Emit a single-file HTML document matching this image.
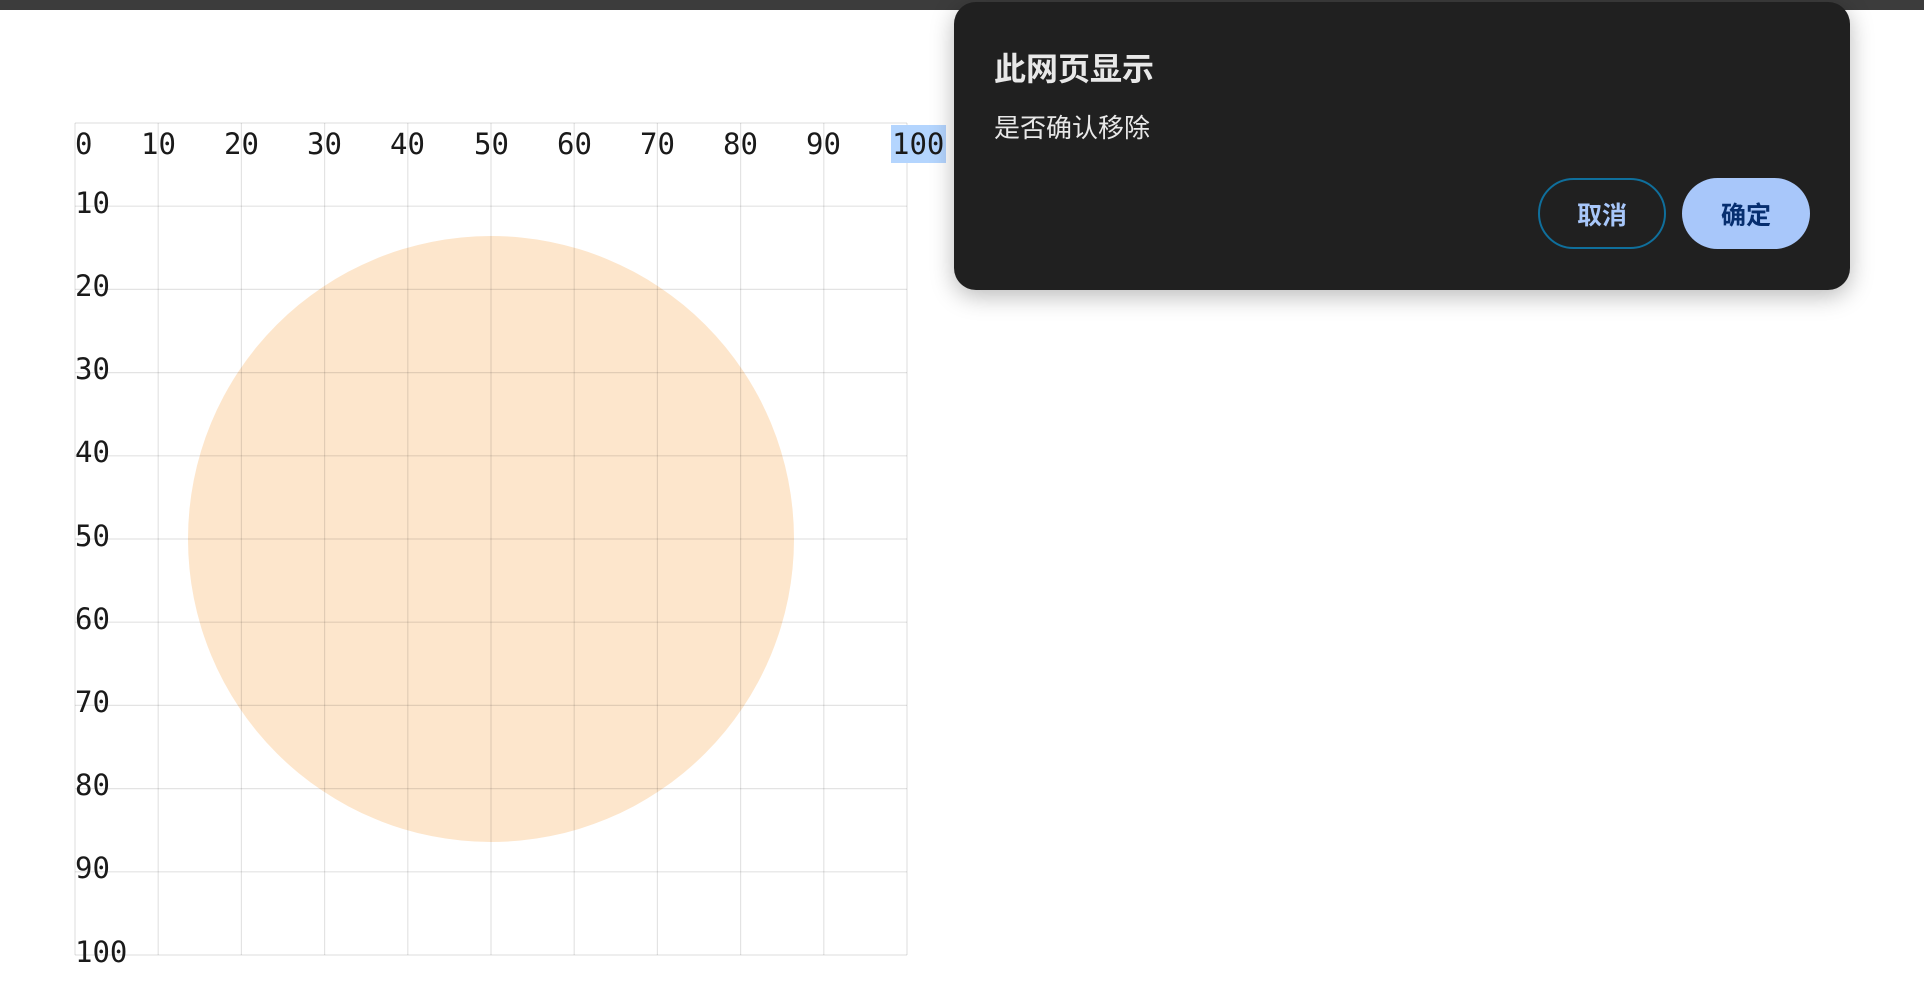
<!DOCTYPE html>
<html><head><meta charset="utf-8"><style>
html,body{margin:0;padding:0;width:1924px;height:990px;overflow:hidden;background:#fff;position:relative}
.bar{position:absolute;left:0;top:0;width:1924px;height:10px;background:#3c3c3c}
.lbl{position:absolute;font-family:"DejaVu Sans Mono","Liberation Mono",monospace;font-size:29px;line-height:29px;color:#1a1a1a;white-space:nowrap}
.dlg{position:absolute;left:954px;top:2px;width:896px;height:288px;background:#202020;border-radius:22px;box-shadow:0 6px 24px rgba(0,0,0,.28);font-family:"Liberation Sans","Noto Sans CJK SC",sans-serif}
.t{position:absolute;left:40px;top:47px;font-size:32px;line-height:40px;font-weight:bold;color:#e8e8e8}
.b{position:absolute;left:40px;top:110px;font-size:26px;line-height:32px;color:#e8e8e8}
.btn{position:absolute;top:176px;height:71px;width:128px;border-radius:36px;box-sizing:border-box;font-size:25px;font-weight:bold;text-align:center;line-height:77px}
.c{left:584px;border:2px solid #0f6f9c;color:#a8c7fa;line-height:73px}
.o{left:728px;background:#a8c7fa;color:#062e6f}
</style></head><body>
<div class="bar"></div>
<svg style="position:absolute;left:0;top:0" width="1924" height="990">
<circle cx="491" cy="539" r="303" fill="#fde6cc"/>
<g stroke="#000" stroke-opacity=".11" stroke-width="1.2" fill="none">
<line x1="75" y1="123" x2="75" y2="955"/><line x1="158.2" y1="123" x2="158.2" y2="955"/><line x1="241.4" y1="123" x2="241.4" y2="955"/><line x1="324.6" y1="123" x2="324.6" y2="955"/><line x1="407.8" y1="123" x2="407.8" y2="955"/><line x1="491" y1="123" x2="491" y2="955"/><line x1="574.2" y1="123" x2="574.2" y2="955"/><line x1="657.4" y1="123" x2="657.4" y2="955"/><line x1="740.6" y1="123" x2="740.6" y2="955"/><line x1="823.8" y1="123" x2="823.8" y2="955"/><line x1="907" y1="123" x2="907" y2="955"/>
<line x1="75" y1="123" x2="907" y2="123"/><line x1="75" y1="206.2" x2="907" y2="206.2"/><line x1="75" y1="289.4" x2="907" y2="289.4"/><line x1="75" y1="372.6" x2="907" y2="372.6"/><line x1="75" y1="455.8" x2="907" y2="455.8"/><line x1="75" y1="539" x2="907" y2="539"/><line x1="75" y1="622.2" x2="907" y2="622.2"/><line x1="75" y1="705.4" x2="907" y2="705.4"/><line x1="75" y1="788.6" x2="907" y2="788.6"/><line x1="75" y1="871.8" x2="907" y2="871.8"/><line x1="75" y1="955" x2="907" y2="955"/>
</g>
<rect x="891" y="125" width="55" height="38" fill="#b4d5fe"/>
</svg>
<div class="lbl" style="left:75px;top:130px">0</div>
<div class="lbl" style="left:141px;top:130px">10</div>
<div class="lbl" style="left:224px;top:130px">20</div>
<div class="lbl" style="left:307px;top:130px">30</div>
<div class="lbl" style="left:390px;top:130px">40</div>
<div class="lbl" style="left:474px;top:130px">50</div>
<div class="lbl" style="left:557px;top:130px">60</div>
<div class="lbl" style="left:640px;top:130px">70</div>
<div class="lbl" style="left:723px;top:130px">80</div>
<div class="lbl" style="left:806px;top:130px">90</div>
<div class="lbl" style="left:892px;top:130px">100</div>
<div class="lbl" style="left:75px;top:189px">10</div>
<div class="lbl" style="left:75px;top:272px">20</div>
<div class="lbl" style="left:75px;top:355px">30</div>
<div class="lbl" style="left:75px;top:438px">40</div>
<div class="lbl" style="left:75px;top:522px">50</div>
<div class="lbl" style="left:75px;top:605px">60</div>
<div class="lbl" style="left:75px;top:688px">70</div>
<div class="lbl" style="left:75px;top:771px">80</div>
<div class="lbl" style="left:75px;top:854px">90</div>
<div class="lbl" style="left:75px;top:938px">100</div>
<div class="dlg">
<div class="t">此网页显示</div>
<div class="b">是否确认移除</div>
<div class="btn c">取消</div>
<div class="btn o">确定</div>
</div>
</body></html>
